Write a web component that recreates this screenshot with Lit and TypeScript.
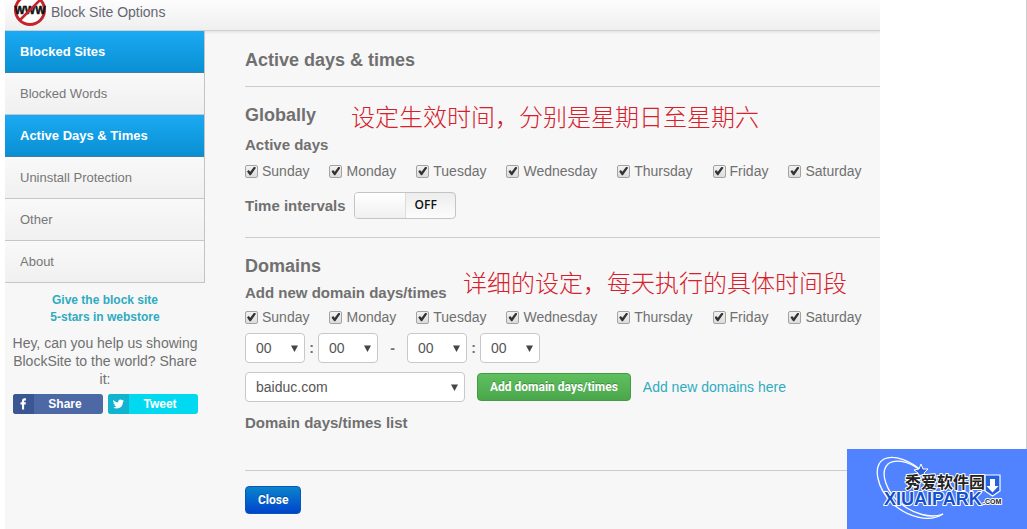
import { LitElement, html, css, svg } from "lit";
import { customElement, property, state } from "lit/decorators.js";

const DAYS = ["Sunday", "Monday", "Tuesday", "Wednesday", "Thursday", "Friday", "Saturday"];
const pad = (n: number) => String(n).padStart(2, "0");
const HOURS = Array.from({ length: 24 }, (_, i) => pad(i));
const MINUTES = Array.from({ length: 60 }, (_, i) => pad(i));

@customElement("day-picker")
class DayPicker extends LitElement {
  @property() legend = "";

  static styles = css`
    :host { display: block; }
    fieldset {
      border: 0; margin: 0; padding: 0; min-width: 0;
      display: flex; flex-wrap: wrap; column-gap: 20px;
    }
    label { display: flex; align-items: center; gap: 4px; line-height: 20px; }
    input {
      appearance: none; margin: 0; width: 13px; height: 13px; box-sizing: border-box;
      border: 1px solid #a3a3a3; border-radius: 2px;
      background: linear-gradient(#f2f2f2, #dcdcdc);
      display: grid; place-items: center;
    }
    input:checked::before {
      content: ""; width: 9px; height: 9px; background: #333;
      clip-path: polygon(0 55%, 18% 40%, 36% 58%, 80% 0, 100% 14%, 42% 98%, 30% 98%);
    }
  `;

  render() {
    return html`<fieldset aria-label=${this.legend}>
      ${DAYS.map((d) => html`<label><input type="checkbox" checked />${d}</label>`)}
    </fieldset>`;
  }
}

@customElement("app-root")
class AppRoot extends LitElement {
  @state() private intervals = false;

  static styles = css`
    :host {
      display: flow-root; position: relative; min-height: 100vh; box-sizing: border-box;
      background: #fff; box-shadow: inset -1px 0 #ccc;
      font: 14px/20px "Liberation Sans", Arial, sans-serif; color: #707070;
    }
    * { box-sizing: border-box; }
    a { color: #2fabc0; text-decoration: none; }
    button, select { font-family: inherit; margin: 0; }

    .app {
      margin: 0 147px 0 5px; min-height: 100vh; background: #f7f7f7; overflow: hidden;
      display: flex; flex-direction: column;
    }
    .bar {
      height: 31px; flex: none; display: flex; align-items: flex-start; gap: 5px; padding-left: 9px;
      background: linear-gradient(#fdfdfd, #efefef); border-bottom: 1px solid #cfcfcf;
      box-shadow: 0 1px 3px #ddd; color: #666672;
    }
    .bar svg { display: block; }
    .bar span { line-height: 24px; }
    .body { flex: 1; display: flex; }

    .side { width: 200px; flex: none; text-align: center; }
    nav { text-align: left; border-right: 1px solid #c4c4c4; position: relative; }
    nav a {
      display: block; height: 42px; line-height: 41px; padding-left: 15px; font-size: 13px;
      color: #777; background: linear-gradient(#f9f9f9, #f0f0f0); border-bottom: 1px solid #c6c6c6;
    }
    nav a.on {
      color: #fff; font-weight: bold;
      background: linear-gradient(#1aaaf3, #0a8fd3); border-bottom-color: #3f7fa0;
    }
    .rate { display: block; margin-top: 9px; font-size: 12px; line-height: 17px; font-weight: bold; }
    .side p { margin: 8px 0 6px; padding: 0 5px; line-height: 18px; }
    .share { display: flex; justify-content: center; gap: 5px; }
    .share a {
      width: 90px; height: 20px; border-radius: 3px; overflow: hidden; display: flex;
      color: #fff; font-size: 12px; line-height: 20px; font-weight: bold;
    }
    .share svg { flex: none; }
    .share span { flex: 1; padding-right: 6px; }
    .fb { background: #4c69a6; }
    .tw { background: #00d9f0; }

    main { flex: 1; min-width: 0; padding-left: 40px; }
    h1, h2, h3 { margin: 0; font-weight: bold; color: #707070; }
    h1, h2 { font-size: 18px; line-height: 24px; }
    h3 { font-size: 15px; line-height: 20px; }
    h1 { padding: 17px 0 14px; }
    section { border-top: 1px solid #ccc; position: relative; padding-top: 16px; }
    .note {
      position: absolute; margin: 0; color: #d6202c; white-space: nowrap;
      font: 300 24px/32px "Noto Sans CJK SC", sans-serif;
    }
    .note-global { left: 106px; top: 13px; }
    .note-domain { left: 218px; top: 28px; }
    .global { height: 151px; }
    .global .sub { margin-top: 8px; }
    .global day-picker { margin: 6px 0 11px; }
    .row { display: flex; align-items: center; }
    .toggle {
      width: 102px; height: 27px; margin-left: 8px; padding: 0; display: flex; align-items: stretch;
      border: 1px solid #c4c4c4; border-radius: 4px; overflow: hidden;
      background: linear-gradient(#ededed, #fcfcfc); color: #111;
      font: 600 12px/24px "Open Sans", sans-serif; text-align: left;
    }
    .toggle i { width: 51px; background: linear-gradient(#fff, #f0f0f0); border-right: 1px solid #ddd; }
    .toggle span { padding-left: 9px; }
    .toggle[aria-checked="true"] { flex-direction: row-reverse; justify-content: space-between; }

    .domains { height: 233px; }
    .domains .sub { margin-top: 5px; }
    .domains day-picker { margin: 4px 0 6px; }
    .domains .list { margin-top: 11px; }
    select {
      appearance: none; height: 30px; border: 1px solid #c8c8c8; border-radius: 4px;
      padding: 0 10px; font-size: 14px; color: #555;
      background: #fff url("data:image/svg+xml,%3Csvg xmlns='http://www.w3.org/2000/svg' width='7' height='7'%3E%3Cpath d='M0 .5h7L3.500 7z' fill='%23444'/%3E%3C/svg%3E") no-repeat right 6px center;
    }
    .time { width: 60px; }
    .colon { width: 13px; text-align: center; font-weight: bold; line-height: 30px; }
    .dash { width: 29px; text-align: center; font-weight: bold; line-height: 30px; }
    .pick { margin-top: 9px; }
    .domain { width: 220px; }
    .btn {
      height: 28px; border-radius: 4px; padding: 0 12px; color: #fff;
      font: bold 12px/20px Roboto, sans-serif; text-shadow: 0 -1px 0 rgba(0, 0, 0, 0.25);
    }
    .add { margin: 0 12px; border: 1px solid #459a45; background: linear-gradient(#5fc05f, #4ba64b); }
    .close { border: 1px solid #0a55b8; background: linear-gradient(#0a84cc, #0044cc); }
    footer { border-top: 1px solid #ccc; padding: 15px 0; }

    .mark { position: absolute; right: 0; bottom: 0; width: 180px; height: 80px; display: block; background: #5182ff; }
    .mark .cn { font: bold 16px "Noto Sans CJK SC", sans-serif; }
    .mark .en { font: bold 18px "Liberation Sans", Arial, sans-serif; }
    .mark .com { font: bold 7px "Liberation Sans", Arial, sans-serif; }
    .mark text { paint-order: stroke; stroke: #fff; stroke-width: 2px; stroke-linejoin: round; }
    .www { font: bold 11px "Liberation Sans", Arial, sans-serif; }
  `;

  private select(label: string, options: string[], cls: string) {
    return html`<select class=${cls} aria-label=${label}>
      ${options.map((o) => html`<option>${o}</option>`)}
    </select>`;
  }

  private logo() {
    return html`<svg width="32" height="27" viewBox="0 0 32 27" aria-hidden="true">
      ${svg`<circle cx="16" cy="10" r="14.500" fill="#fff" stroke="#c4252b" stroke-width="3" />
      <text class="www" x="16" y="14" text-anchor="middle" fill="#111" stroke="#111" stroke-width=".5">WWW</text>
      <path d="M6 20L26 0" stroke="#c4252b" stroke-width="2.500" />`}
    </svg>`;
  }

  private watermark() {
    return html`<svg class="mark" viewBox="0 0 180 80" role="img" aria-label="XIUAIPARK.COM">
      ${svg`<g fill="none" stroke="#fff">
        <path d="M77 24C65 12 47 5 37 10C25 17 30 39 45 54C60 68 82 74 96 65" stroke-width="1.300" />
        <path d="M73 21C60 11 47 10 41 15C32 24 40 43 53 54C66 65 84 70 96 65" stroke-width="1.300" />
        <path d="M74 15l2 5 5 0-4 4 2 5-5-3-4 3 1-5-4-3 5-1z" fill="#2f62d8" stroke-width="1" />
      </g>
      <path d="M138 26h15v16l-7.500 5-7.500-5z" fill="#2463dd" stroke="#fff" stroke-width="1.200" />
      <path d="M143 30h5v7h3.500l-6 6.500-6-6.500h3.500z" fill="#fff" />
      <text class="cn" x="58" y="39" fill="#222">秀爱软件园</text>
      <text class="en" x="37" y="56" fill="#1550c8">XIUAIPARK</text>
      <text class="com" x="136" y="55" fill="#222">.COM</text>`}
    </svg>`;
  }

  render() {
    return html`
      <div class="app">
        <header class="bar">${this.logo()}<span>Block Site Options</span></header>
        <div class="body">
          <aside class="side">
            <nav>
              <a class="on" href="#sites">Blocked Sites</a>
              <a href="#words">Blocked Words</a>
              <a class="on" href="#times">Active Days &amp; Times</a>
              <a href="#protection">Uninstall Protection</a>
              <a href="#other">Other</a>
              <a href="#about">About</a>
            </nav>
            <a class="rate" href="#rate">Give the block site<br />5-stars in webstore</a>
            <p>Hey, can you help us showing BlockSite to the world? Share it:</p>
            <div class="share">
              <a class="fb" href="#share"
                ><svg width="21" height="20" viewBox="0 0 21 20" aria-hidden="true">
                  <rect width="21" height="20" fill="#3a5794" />
                  <path d="M9 15.500v-5H7.500V8.300H9V7c0-1.900 1-2.700 2.500-2.700h1.400v2.100h-1c-.600 0-.8.300-.8.800v1.100h1.800l-.3 2.200h-1.500v5z" fill="#fff" /></svg
                ><span>Share</span></a>
              <a class="tw" href="#tweet"
                ><svg width="21" height="20" viewBox="0 0 21 20" aria-hidden="true">
                  <rect width="21" height="20" fill="#10b4cf" />
                  <path d="M5.300 6c1.300 1.600 3 2.400 4.900 2.500-.3-1.700.8-3 2.300-3 .7 0 1.300.3 1.700.7l1.500-.5-.9 1.300 1.300-.3-1.200 1.300c.1 3.700-2.700 6.500-6.100 6.500-1.400 0-2.700-.4-3.700-1.100 1.300.1 2.500-.2 3.400-.9-1.100-.1-1.800-.7-2.200-1.600h1c-1.200-.4-1.800-1.200-1.900-2.300l1 .2C5.300 8.100 4.900 7.100 5.300 6z" fill="#fff" /></svg
                ><span>Tweet</span></a>
            </div>
          </aside>
          <main>
            <h1>Active days &amp; times</h1>
            <section class="global">
              <h2>Globally</h2>
              <p class="note note-global" lang="zh">设定生效时间，分别是星期日至星期六</p>
              <h3 class="sub">Active days</h3>
              <day-picker legend="Active days"></day-picker>
              <div class="row">
                <h3 id="ti">Time intervals</h3>
                <button class="toggle" role="switch" aria-labelledby="ti"
                  aria-checked=${this.intervals ? "true" : "false"}
                  @click=${() => (this.intervals = !this.intervals)}
                ><i></i><span>${this.intervals ? "ON" : "OFF"}</span></button>
              </div>
            </section>
            <section class="domains">
              <h2>Domains</h2>
              <p class="note note-domain" lang="zh">详细的设定，每天执行的具体时间段</p>
              <h3 class="sub">Add new domain days/times</h3>
              <day-picker legend="Domain days"></day-picker>
              <div class="row">
                ${this.select("From hour", HOURS, "time")}<span class="colon">:</span>${this.select("From minute", MINUTES, "time")}
                <span class="dash">-</span>
                ${this.select("To hour", HOURS, "time")}<span class="colon">:</span>${this.select("To minute", MINUTES, "time")}
              </div>
              <div class="row pick">
                ${this.select("Domain", ["baiduc.com"], "domain")}
                <button class="btn add">Add domain days/times</button>
                <a href="#add">Add new domains here</a>
              </div>
              <h3 class="list">Domain days/times list</h3>
            </section>
            <footer><button class="btn close">Close</button></footer>
          </main>
        </div>
      </div>
      ${this.watermark()}
    `;
  }
}
